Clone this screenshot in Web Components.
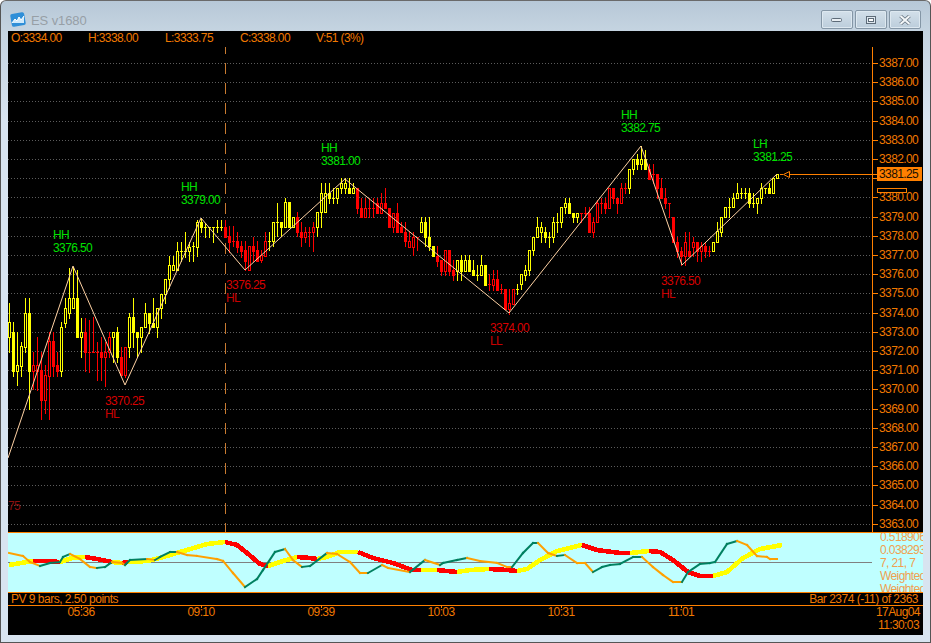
<!DOCTYPE html>
<html>
<head>
<meta charset="utf-8">
<title>ES v1680</title>
<style>
    html, body { margin: 0; padding: 0; background: #fff; }
</style>
</head>
<body>
<trade-window>
    <title-bar slot="title">ES v1680</title-bar>
    <ohlc-header></ohlc-header>
    <price-chart></price-chart>
    <osc-panel></osc-panel>
    <status-row></status-row>
    <time-axis></time-axis>
</trade-window>

<script>
const FONT = '"Liberation Sans", Arial, sans-serif';
const ORANGE = "#f07800";

class TradeWindow extends HTMLElement {
    constructor(){
        super();
        this.attachShadow({mode:"open"}).innerHTML = `
        <style>
            :host {
                display: block;
                box-sizing: border-box;
                width: 931px;
                height: 643px;
                border: 1px solid #555;
                border-top-color: #6a6a6a;
                border-radius: 6px 6px 0 0;
                background: linear-gradient(#b7c8d7 0, #c5d4e1 30px, #d8e4f0 120px, #d8e4f0 100%);
                overflow: hidden;
            }
            .content {
                display: flex;
                flex-direction: column;
                margin: 0 7px;
                height: 604px;
                background: #000;
            }
        </style>
        <slot name="title"></slot>
        <div class="content"><slot></slot></div>`;
    }
}

class WinButton extends HTMLElement {
    constructor(){
        super();
        this.attachShadow({mode:"open"}).innerHTML = `
        <style>
            :host {
                display: flex;
                align-items: center;
                justify-content: center;
                box-sizing: border-box;
                width: 32px;
                height: 19px;
                border: 1px solid #8496a6;
                border-radius: 2px;
                background: linear-gradient(#d3e0ea, #bccddb);
                box-shadow: inset 0 0 0 1px #dde8f0;
            }
        </style>
        <slot></slot>`;
    }
}

class TitleBar extends HTMLElement {
    constructor(){
        super();
        this.attachShadow({mode:"open"}).innerHTML = `
        <style>
            :host {
                display: flex;
                align-items: flex-start;
                box-sizing: border-box;
                height: 30px;
                padding: 9px 9px 0 9px;
                font: 13px ${FONT};
                color: #979fa6;
            }
            svg.logo { display: block; margin: 2px 5px 0 0; }
            .name { margin-top: 3px; letter-spacing: -.1px; }
            .buttons { display: flex; gap: 2px; margin-left: auto; }
        </style>
        <svg class="logo" width="16" height="15" viewBox="0 0 16 15">
            <rect x="1" y="1" width="14" height="13" rx="2" fill="#2f8fd8" transform="rotate(-10 8 7.5)"/>
            <path d="M2 11 L5 7 L7 9 L9 5 L11 8 L14 4 L14 11 Z" fill="#cfeafc"/>
            <path d="M2 11 L5 7 L7 9 L9 5 L11 8 L14 4" fill="none" stroke="#fff" stroke-width="1"/>
        </svg>
        <span class="name"><slot></slot></span>
        <div class="buttons">
            <win-button>
                <svg width="12" height="7" viewBox="0 0 12 7"><rect x=".5" y="2.5" width="10" height="3" rx="1" fill="#e8eef3" stroke="#5d6b78"/></svg>
            </win-button>
            <win-button>
                <svg width="12" height="10" viewBox="0 0 12 10"><rect x="1.5" y="1.5" width="9" height="7" fill="#dfe8ef" stroke="#5d6b78"/><rect x="3.5" y="3.5" width="5" height="3" fill="#fff" stroke="#5d6b78"/></svg>
            </win-button>
            <win-button>
                <svg width="12" height="10" viewBox="0 0 12 10"><path d="M1.5 1 L10.5 9 M10.5 1 L1.5 9" stroke="#6b7884" stroke-width="3.6"/><path d="M1.5 1 L10.5 9 M10.5 1 L1.5 9" stroke="#f4f7f9" stroke-width="2"/></svg>
            </win-button>
        </div>`;
    }
}

class OhlcHeader extends HTMLElement {
    constructor(){
        super();
        this.attachShadow({mode:"open"}).innerHTML = `
        <style>
            :host {
                display: grid;
                grid-template-columns: 77px 77px 75px 76px auto;
                flex: none;
                height: 16px;
                padding-left: 3px;
                font: 12px/14px ${FONT};
                letter-spacing: -.6px;
                color: ${ORANGE};
            }
        </style>
        <span>O:3334.00</span>
        <span>H:3338.00</span>
        <span>L:3333.75</span>
        <span>C:3338.00</span>
        <span>V:51 (3%)</span>`;
    }
}

// x type top bottom high low, all in page pixels read off the chart
// y = hollow yellow, Y = solid yellow, r = hollow red, R = solid red
const CANDLES = `
9 y 322 337 303 352
13 Y 332 371 322 376
17 y 365 371 332 385
21 y 346 366 342 376
25 y 313 347 298 352
29 Y 313 371 298 409
33 r 365 371 352 389
37 r 365 371 337 390
41 R 370 400 352 419
45 r 375 400 365 413
49 r 341 376 332 419
53 R 341 366 332 376
57 R 365 371 352 376
61 y 327 371 322 376
65 y 308 323 298 327
69 y 298 313 268 318
73 y 298 308 267 303
77 Y 298 337 270 337
81 y 332 337 318 357
85 R 332 352 318 371
89 r 352 352 320 372
93 r 352 352 317 352
97 r 352 352 342 380
101 R 352 357 337 380
105 r 352 357 342 386
109 r 337 352 332 357
113 y 332 337 332 362
117 Y 332 357 327 362
121 R 357 375 347 375
125 r 347 375 347 377
129 y 317 347 313 357
133 Y 317 332 298 347
137 Y 332 337 332 357
141 y 327 337 327 352
145 y 313 327 303 327
149 Y 313 323 313 333
153 Y 323 327 298 327
157 y 308 327 308 337
161 y 294 308 294 318
165 y 279 294 279 303
169 y 265 279 256 288
173 y 265 270 256 270
177 y 251 270 242 270
181 y 251 251 242 261
185 y 251 251 232 257
189 y 247 251 242 261
193 y 246 246 242 261
197 y 222 247 220 256
201 Y 222 227 218 232
205 y 227 227 223 237
209 y 227 227 227 237
213 y 227 227 227 242
217 y 227 227 220 232
221 y 227 227 220 230
225 R 227 237 220 237
229 R 236 242 226 252
233 r 241 241 226 246
237 R 241 247 232 252
241 R 246 251 241 257
245 R 250 261 241 270
249 r 246 270 246 270
253 R 246 251 237 261
257 R 250 261 241 261
261 r 255 260 250 262
265 r 241 256 232 256
269 y 241 241 232 250
273 y 222 241 222 246
277 y 222 222 203 236
281 Y 222 227 222 236
285 y 202 227 198 227
289 Y 202 227 202 227
293 y 217 227 217 227
297 R 217 232 212 236
301 R 232 237 222 246
305 r 232 237 227 242
309 r 232 232 227 246
313 r 227 232 222 251
317 y 212 227 212 236
321 y 193 212 183 227
325 y 193 212 183 212
329 Y 193 198 183 203
333 y 198 198 188 203
337 y 188 198 188 203
341 y 183 188 178 193
345 y 183 188 178 193
349 Y 188 193 178 193
353 y 188 193 183 193
357 R 188 208 188 213
361 R 208 217 198 217
365 r 208 217 198 217
369 r 208 208 198 217
373 r 208 208 198 217
377 R 203 213 198 213
381 r 203 213 193 213
385 R 203 208 188 208
389 R 208 227 208 227
393 r 213 227 213 232
397 R 213 232 203 232
401 R 227 232 222 232
405 R 232 241 222 246
409 r 241 247 232 247
413 r 237 247 232 255
417 r 237 237 237 250
421 y 222 232 217 232
425 Y 222 237 217 246
429 Y 237 246 217 250
433 Y 246 256 246 256
437 R 256 261 246 266
441 R 260 271 260 275
445 r 250 271 250 275
449 R 250 271 250 275
453 R 270 275 260 280
457 y 260 271 260 280
461 Y 260 271 255 280
465 y 260 271 255 271
469 Y 260 271 255 271
473 Y 270 275 260 275
477 y 275 275 265 280
481 y 265 275 255 275
485 Y 265 285 265 285
489 r 284 284 274 290
493 r 279 285 270 290
497 R 279 290 270 290
501 r 289 289 284 293
505 R 289 309 289 309
509 r 303 309 289 314
513 r 289 304 289 304
517 y 289 289 284 294
521 y 274 284 274 289
525 y 270 275 265 280
529 y 250 270 250 275
533 y 237 250 237 255
537 y 227 237 217 237
541 y 227 232 222 242
545 Y 232 237 227 242
549 y 237 237 232 247
553 y 222 237 217 242
557 y 222 222 213 232
561 y 207 222 207 227
565 y 203 207 198 213
569 Y 203 213 198 213
573 Y 213 217 213 222
577 y 213 217 213 222
581 r 213 213 213 222
585 r 213 213 207 217
589 R 213 232 207 232
593 r 222 232 217 237
597 r 203 222 200 222
601 r 203 203 198 213
605 R 203 208 198 213
609 r 188 208 188 208
613 R 188 198 188 203
617 R 198 203 198 213
621 r 188 203 183 203
625 r 188 188 183 193
629 y 169 188 169 193
633 y 159 169 159 174
637 Y 159 164 154 169
641 y 159 164 146 169
645 Y 159 169 150 169
649 R 169 179 164 179
653 r 174 174 164 183
657 R 174 188 174 198
661 R 188 198 178 198
665 R 198 203 188 208
669 r 203 203 203 217
673 R 217 242 217 242
677 R 242 251 237 257
681 R 251 256 247 265
685 r 242 256 232 265
689 R 251 256 232 256
693 r 242 247 237 256
697 R 242 251 242 261
701 r 246 251 242 261
705 R 246 251 242 257
709 r 251 251 246 256
713 y 242 251 242 251
717 y 231 242 222 242
721 y 217 232 217 236
725 y 207 217 207 217
729 y 207 207 198 217
733 y 198 207 193 207
737 y 193 198 183 198
741 y 193 193 188 198
745 y 193 193 188 198
749 Y 193 203 188 207
753 y 203 203 193 207
757 y 198 203 198 213
761 y 188 198 183 203
765 y 188 188 188 193
769 Y 188 193 183 193
773 y 178 193 178 193
777 y 174 178 174 178`;

const ZIGZAG = "8,458 73,266 125,385 201,218 245,270 345,179 509,313 641,146 682,265 777,174";

const PIVOTS = [
    [53, 239, "HH", "#00e000"], [53, 252, "3376.50", "#00e000"],
    [181, 191, "HH", "#00e000"], [181, 204, "3379.00", "#00e000"],
    [226, 289, "3376.25", "#d80000"], [226, 302, "HL", "#c80000"],
    [321, 152, "HH", "#00e000"], [321, 165, "3381.00", "#00e000"],
    [105, 405, "3370.25", "#d80000"], [105, 418, "HL", "#c80000"],
    [490, 332, "3374.00", "#d80000"], [490, 345, "LL", "#c80000"],
    [621, 119, "HH", "#00e000"], [621, 132, "3382.75", "#00e000"],
    [661, 285, "3376.50", "#d80000"], [661, 298, "HL", "#c80000"],
    [753, 148, "LH", "#00e000"], [753, 161, "3381.25", "#00e000"],
    [8, 510, "75", "#8a1010"]
];

class PriceChart extends HTMLElement {
    constructor(){
        super();
        this.shadowDOM = this.attachShadow({mode:"open"});
        this.render();
    }

    priceY(p){
        return Math.round(63 + (3387 - p) * 19.2);
    }

    candle(row){
        const [x, t, top, bot, hi, lo] = row.split(" ").map((v, i) => i == 1 ? v : +v);
        const c = (t == "y" || t == "Y") ? "#ffff00" : "#ff0000";
        let s = `<rect x="${x}" y="${hi}" width="1" height="${lo - hi + 1}" fill="${c}"/>`;
        if(top == bot){
            s += `<rect x="${x - 1}" y="${top}" width="3" height="1" fill="${c}"/>`;
        } else if(t == "y" || t == "r"){
            s += `<rect x="${x - 0.5}" y="${top}.5" width="2" height="${bot - top}" fill="#000" stroke="${c}"/>`;
        } else {
            s += `<rect x="${x - 1}" y="${top}" width="3" height="${bot - top + 1}" fill="${c}"/>`;
        }
        return s;
    }

    render(){
        let grid = "", axis = "";
        for(let p = 3387; p >= 3363; p--){
            const y = this.priceY(p);
            grid += `<line x1="8" x2="870" y1="${y}.5" y2="${y}.5"/>`;
            axis += `<rect x="873" y="${y}" width="5" height="1" fill="#ff8000"/>`;
            if(p != 3381) axis += `<text x="879" y="${y + 4}">${p}.00</text>`;
        }
        const candles = CANDLES.trim().split("\n").map(r => this.candle(r.trim())).join("");
        const pivots = PIVOTS.map(([x, y, s, c]) => `<text x="${x}" y="${y}" fill="${c}">${s}</text>`).join("");
        this.shadowDOM.innerHTML = `
        <style>
            :host { display: block; flex: none; height: 485px; }
            svg { display: block; }
            text { font: 12px ${FONT}; letter-spacing: -.6px; }
            .grid line { stroke: #5c5c5c; stroke-dasharray: 1 2; }
            .axis text { fill: #f07800; }
            .crisp { shape-rendering: crispEdges; }
        </style>
        <svg width="915" height="485" viewBox="8 47 915 485">
            <g class="grid">${grid}</g>
            <line x1="225.5" x2="225.5" y1="43" y2="532" stroke="#c87a30" stroke-dasharray="11 9"/>
            <g class="crisp">${candles}</g>
            <polyline points="${ZIGZAG}" fill="none" stroke="#ffd2a4" stroke-width="1"/>
            <g>${pivots}</g>
            <g class="axis">
                <rect class="crisp" x="872" y="47" width="1" height="485" fill="#ff8000"/>
                ${axis}
                <rect class="crisp" x="877" y="167" width="45" height="14" fill="#ff8000"/>
                <text x="879" y="178" style="fill:#201000">3381.25</text>
                <rect class="crisp" x="877.5" y="188.5" width="29" height="4" fill="#000" stroke="#ff8000"/>
                <path class="crisp" d="M780 174.5 H783 M789 174.5 H877" stroke="#ff8000" fill="none"/>
                <path d="M783.5 174.5 L789.5 171.5 V177.5 Z" fill="#000" stroke="#ff8000"/>
            </g>
        </svg>`;
    }
}

// thick signal line, split where it changes colour
const SIGNAL = [
    ["#ffff00", "9,565 33,561"],
    ["#ff0000", "33,561 43,561 60,562"],
    ["#ffff00", "60,562 72,558 85,557"],
    ["#ff0000", "85,557 97,559 112,562"],
    ["#ffff00", "112,562 122,563"],
    ["#ff0000", "122,563 128,562"],
    ["#ffff00", "128,562 147,561 160,558 170,555 187,550 207,544 225,542"],
    ["#ff0000", "225,542 237,545 247,553 260,564 268,566"],
    ["#ffff00", "268,566 283,561 297,557"],
    ["#ff0000", "297,557 310,558 317,559"],
    ["#ffff00", "317,559 327,557 340,552 358,552"],
    ["#ff0000", "358,552 373,558 393,563 412,570 421,570"],
    ["#ffff00", "421,570 437,570"],
    ["#ff0000", "437,570 457,572"],
    ["#ffff00", "457,572 470,570 489,569"],
    ["#ff0000", "489,569 507,570 517,571"],
    ["#ffff00", "517,571 527,569 540,560 557,551 582,545"],
    ["#ff0000", "582,545 597,550 620,553 630,553"],
    ["#ffff00", "630,553 649,551"],
    ["#ff0000", "649,551 660,552 673,560 688,572 700,576 713,576"],
    ["#ffff00", "713,576 727,572 743,558 760,549 782,545"]
];

// thin line: green while rising, orange while falling
const OSC = [[9,553],[23,556],[30,562],[40,566],[50,563],[60,562],[63,557],[70,554],[80,559],[90,567],[97,568],
    [105,567],[112,562],[122,563],[125,565],[130,560],[147,559],[155,560],[160,557],[170,552],[177,552],[187,555],
    [197,556],[217,559],[223,561],[233,573],[245,587],[257,579],[263,570],[275,552],[285,549],[293,560],[302,567],
    [310,566],[327,553],[337,554],[350,562],[360,573],[368,573],[382,565],[388,568],[410,572],[425,560],[440,565],
    [443,563],[457,560],[467,558],[480,561],[497,563],[507,567],[512,567],[523,553],[533,543],[538,543],[548,553],
    [557,556],[565,555],[577,563],[585,563],[593,572],[602,567],[610,565],[620,564],[633,557],[642,557],[653,567],
    [663,575],[673,582],[682,582],[688,572],[700,564],[710,563],[715,562],[727,544],[737,541],[747,545],[757,556],
    [767,557],[770,559],[777,559]];

class OscPanel extends HTMLElement {
    constructor(){
        super();
        const shadow = this.attachShadow({mode:"open"});
        const signal = SIGNAL.map(([c, p]) => `<polyline points="${p}" stroke="${c}" stroke-width="4.6"/>`).join("");
        let thin = "", last = "#ffa000";
        for(let i = 1; i < OSC.length; i++){
            const [x1, y1] = OSC[i - 1], [x2, y2] = OSC[i];
            if(y2 != y1) last = y2 < y1 ? "#008060" : "#ffa000";
            thin += `<line x1="${x1}" y1="${y1}" x2="${x2}" y2="${y2}" stroke="${last}" stroke-width="2" stroke-linecap="square"/>`;
        }
        shadow.innerHTML = `
        <style>
            :host {
                display: flex;
                flex: none;
                box-sizing: border-box;
                height: 61px;
                background: #bfffff;
                border-top: 1px solid #ff8000;
                border-bottom: 1px solid #ff8000;
                overflow: hidden;
            }
            svg { display: block; flex: none; }
            .values {
                box-sizing: border-box;
                width: 51px;
                height: 61px;
                margin-top: -2px;
                padding-left: 8px;
                font: 12px/13px ${FONT};
                letter-spacing: -.6px;
                color: #f0a050;
                white-space: nowrap;
                overflow: hidden;
            }
        </style>
        <svg width="864" height="59" viewBox="8 533 864 59" fill="none">
            <rect x="8" y="562" width="865" height="1" fill="#808080"/>
            <g shape-rendering="crispEdges">${signal}</g>
            <g>${thin}</g>
        </svg>
        <div class="values">
            <div>0.518906</div>
            <div>0.038293</div>
            <div>7, 21, 7</div>
            <div>Weighted</div>
            <div>Weighted</div>
        </div>`;
    }
}

class StatusRow extends HTMLElement {
    constructor(){
        super();
        this.attachShadow({mode:"open"}).innerHTML = `
        <style>
            :host {
                display: flex;
                justify-content: space-between;
                flex: none;
                box-sizing: border-box;
                height: 12px;
                padding: 0 5px 0 3px;
                font: 12px/13px ${FONT};
                letter-spacing: -.5px;
                color: ${ORANGE};
            }
        </style>
        <span>PV 9 bars, 2.50 points</span>
        <span>Bar 2374 (-11) of 2363</span>`;
    }
}

class TimeAxis extends HTMLElement {
    constructor(){
        super();
        const times = ["05:36", "09:10", "09:39", "10:03", "10:31", "11:01"];
        this.attachShadow({mode:"open"}).innerHTML = `
        <style>
            :host {
                display: flex;
                flex: none;
                box-sizing: border-box;
                height: 30px;
                border-top: 1px solid #ff8000;
                font: 12px/13px ${FONT};
                letter-spacing: -.6px;
                color: ${ORANGE};
            }
            .ticks {
                display: grid;
                grid-template-columns: repeat(6, 120px);
                width: 868px;
                padding-left: 13px;
                box-sizing: border-box;
            }
            .ticks span {
                text-align: center;
                background: linear-gradient(#ff8000, #ff8000) center top / 1px 2px no-repeat;
            }
            .stamp { text-align: right; white-space: nowrap; width: 43px; }
        </style>
        <div class="ticks">${times.map(t => `<span>${t}</span>`).join("")}</div>
        <div class="stamp"><div>17Aug04</div><div>11:30:03</div></div>`;
    }
}

customElements.define("win-button", WinButton);
customElements.define("title-bar", TitleBar);
customElements.define("ohlc-header", OhlcHeader);
customElements.define("price-chart", PriceChart);
customElements.define("osc-panel", OscPanel);
customElements.define("status-row", StatusRow);
customElements.define("time-axis", TimeAxis);
customElements.define("trade-window", TradeWindow);
</script>
</body>
</html>
